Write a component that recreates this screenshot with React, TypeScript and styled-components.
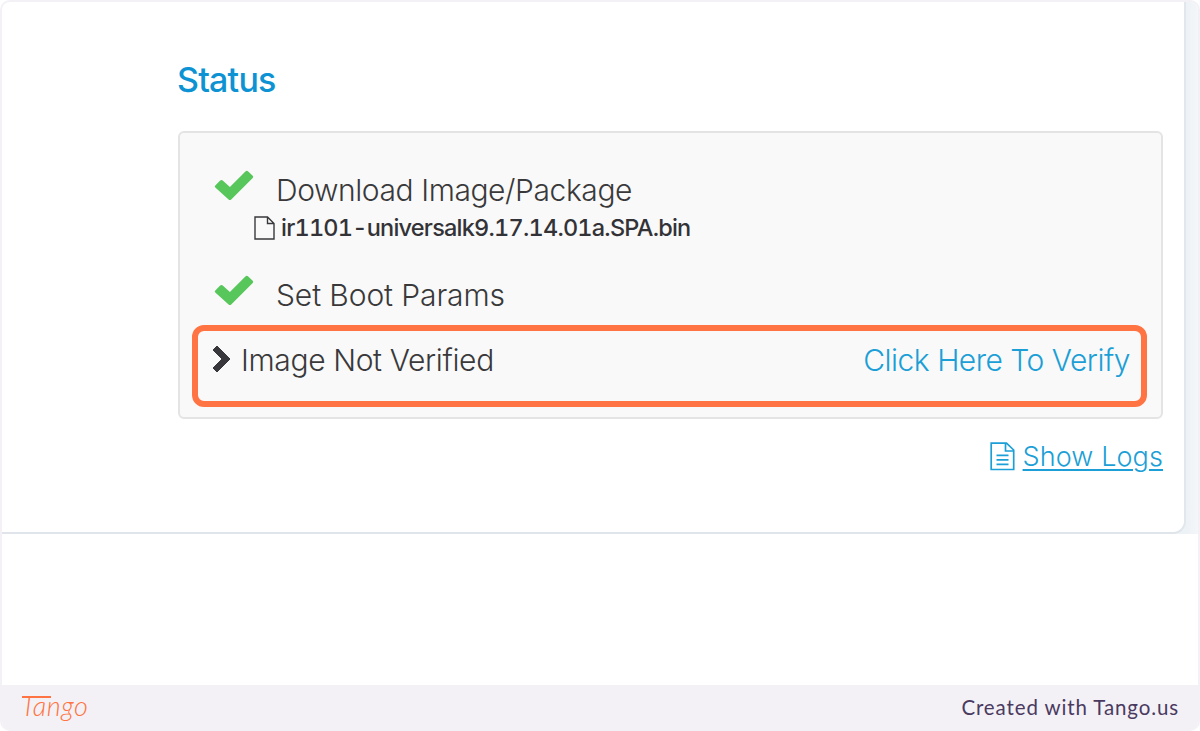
import React from "react";
import styled, { createGlobalStyle } from "styled-components";

const GlobalStyle = createGlobalStyle`
  *, *::before, *::after { box-sizing: border-box; }
  body { margin: 0; background: #fff; }
`;

const Frame = styled.main`
  display: flex;
  flex-direction: column;
  width: 1200px;
  height: 731px;
  border: 2px solid #f3f1f6;
  border-bottom: 0;
  border-radius: 10px;
  overflow: hidden;
  background: #fff;
  font-family: Inter, "Liberation Sans", sans-serif;
`;

const Shot = styled.div`
  height: 532px;
  padding-right: 12px;
  background: linear-gradient(90deg, #edf2f6 1184px, #f4f6f9 1196px);
`;

const Page = styled.section`
  display: flex;
  flex-direction: column;
  height: 532px;
  padding: 0 21px 0 176px;
  border-right: 2px solid #e1e7ed;
  border-bottom: 2px solid #dfe5ea;
  border-bottom-right-radius: 13px;
  background: #fff;
`;

const Heading = styled.h2`
  margin: 57px 0 0 -1px;
  font-size: 34px;
  line-height: 42px;
  font-weight: 500;
  letter-spacing: -0.8px;
  color: #0d93d3;
`;

const Panel = styled.div`
  height: 288px;
  margin-top: 30px;
  padding: 37px 14px 0 12px;
  border: 2px solid #e4e4e4;
  border-radius: 6px;
  background: #f9f9f9;
`;

const Step = styled.div`
  display: flex;
  align-items: flex-start;
  height: 40px;
  padding-left: 22px;
  svg { flex: none; }
`;

const StepLabel = styled.span<{ $spacing?: number }>`
  margin-left: 21px;
  font-size: 30px;
  line-height: 40px;
  font-weight: 300;
  white-space: nowrap;
  letter-spacing: ${(p) => p.$spacing ?? 0}px;
  color: #39393b;
`;

const FileRow = styled.div`
  display: flex;
  align-items: center;
  gap: 6px;
  height: 34px;
  margin: 1px 0 30px;
  padding-left: 62px;
`;

const FileName = styled.span`
  font-size: 23.5px;
  line-height: 34px;
  font-weight: 500;
  font-variant-numeric: tabular-nums;
  letter-spacing: -0.78px;
  white-space: nowrap;
  color: #333337;
`;

const Highlight = styled.div`
  display: flex;
  align-items: flex-start;
  height: 82px;
  margin-top: 10px;
  padding: 9px 11px 0 14px;
  border: 6px solid #ff7442;
  border-radius: 12px;
  > svg { flex: none; margin-top: 5px; }
`;

const VerifyLabel = styled(StepLabel)`
  margin-left: 10px;
`;

const VerifyLink = styled(StepLabel).attrs({ as: "a" })`
  margin-left: auto;
  color: #1c9fd6;
`;

const LogsRow = styled.div`
  display: flex;
  justify-content: flex-end;
  align-items: center;
  gap: 8px;
  height: 36px;
  margin-top: 20px;
  > svg { margin-bottom: 2px; }
`;

const LogsLink = styled.a`
  font-size: 27px;
  line-height: 36px;
  font-weight: 300;
  letter-spacing: 0.1px;
  white-space: nowrap;
  color: #1c9fd6;
  text-decoration: underline;
  text-decoration-thickness: 1.5px;
  text-underline-offset: 3px;
`;

const Footer = styled.footer`
  display: flex;
  align-items: center;
  justify-content: space-between;
  height: 46px;
  margin-top: auto;
  padding: 0 19px 3px;
  background: #f3f1f6;
`;

const Brand = styled.span`
  position: relative;
  font-family: Lato, sans-serif;
  font-size: 27px;
  font-style: italic;
  font-weight: 300;
  line-height: 38px;
  padding-bottom: 2px;
  letter-spacing: 0.5px;
  color: #ff7442;

  &::before {
    content: "";
    position: absolute;
    top: 9px;
    left: 1px;
    width: 29px;
    height: 2px;
    background: #ff7442;
  }
`;

const Credit = styled.span`
  font-family: Lato, sans-serif;
  font-size: 20.5px;
  line-height: 28px;
  letter-spacing: 0.88px;
  color: #4a3a60;
`;

const Check = () => (
  <svg width="41" height="34" viewBox="0 0 41 34">
    <path
      d="M1.3 15.4 6.2 10.5Q7.4 9.4 8.7 10.5L15.9 17.1 31.4 1.6Q32.8.2 34.2 1.5L38.7 5.8Q39.7 6.8 38.7 7.9L17.2 29.4Q15.9 30.6 14.6 29.4L1.3 17.5Q.2 16.5 1.3 15.4Z"
      fill="#57c65b"
    />
  </svg>
);

const FileIcon = () => (
  <svg width="21" height="24" viewBox="0 0 21 24" fill="none" stroke="#39393b" strokeWidth="1.4">
    <path d="M1 1H13.5L20 7.5V23H1ZM13.5 1V7.5H20" />
  </svg>
);

const Chevron = () => (
  <svg width="19" height="28" viewBox="0 0 19 28">
    <path d="M1 5 5 1 18 14 5 27 1 23 10 14Z" fill="#37373c" stroke="#37373c" strokeLinejoin="round" />
  </svg>
);

const LogIcon = () => (
  <svg width="25" height="29" viewBox="0 0 25 29" fill="none" stroke="#1c9fd6" strokeWidth="1.7">
    <path d="M1.2 1.2H16.5L23.7 8V27.5H1.2ZM15.5 1.2V9H23.7M6.5 13.3H18.5M6.5 17.8H18.5M6.5 22.3H18.5" />
  </svg>
);

export default function App() {
  return (
    <>
      <GlobalStyle />
      <Frame>
        <Shot>
          <Page>
            <Heading>Status</Heading>
            <Panel>
              <Step>
                <Check />
                <StepLabel $spacing={-0.42}>Download Image/Package</StepLabel>
              </Step>
              <FileRow>
                <FileIcon />
                <FileName>ir1101-universalk9.17.14.01a.SPA.bin</FileName>
              </FileRow>
              <Step>
                <Check />
                <StepLabel $spacing={-0.1}>Set Boot Params</StepLabel>
              </Step>
              <Highlight>
                <Chevron />
                <VerifyLabel $spacing={-0.36}>Image Not Verified</VerifyLabel>
                <VerifyLink $spacing={-0.5}>Click Here To Verify</VerifyLink>
              </Highlight>
            </Panel>
            <LogsRow>
              <LogIcon />
              <LogsLink>Show Logs</LogsLink>
            </LogsRow>
          </Page>
        </Shot>
        <Footer>
          <Brand>Tango</Brand>
          <Credit>Created with Tango.us</Credit>
        </Footer>
      </Frame>
    </>
  );
}
